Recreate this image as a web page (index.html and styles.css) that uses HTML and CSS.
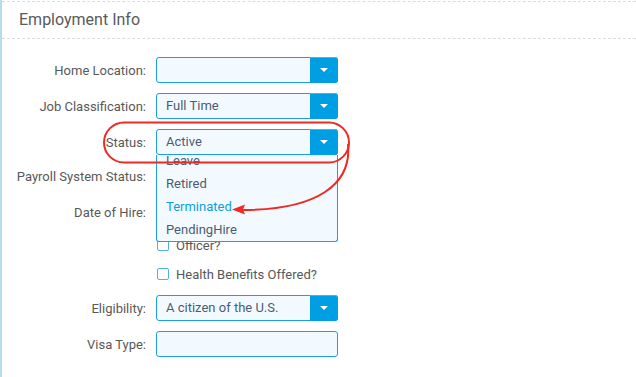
FILE: index.html
```html
<!DOCTYPE html>
<html lang="en">
<head>
    <meta charset="UTF-8">
    <title>Employment Info</title>
    <link rel="stylesheet" href="styles.css">
</head>
<body>
    <div class="panel">
        <div class="panel-head">Employment Info</div>

        <div class="form">
            <div class="row">
                <label>Home Location:</label>
                <div class="select"><span class="value"></span><span class="btn"><i class="caret"></i></span></div>
            </div>
            <div class="row">
                <label>Job Classification:</label>
                <div class="select"><span class="value">Full Time</span><span class="btn"><i class="caret"></i></span></div>
            </div>
            <div class="row status-row">
                <label>Status:</label>
                <div class="select open">
                    <span class="value">Active</span><span class="btn"><i class="caret"></i></span>
                    <!-- open dropdown, scrolled a little -->
                    <div class="options">
                        <ul>
                            <li>Leave</li>
                            <li>Retired</li>
                            <li class="hover">Terminated</li>
                            <li>PendingHire</li>
                        </ul>
                    </div>
                </div>
            </div>
            <div class="row">
                <label>Payroll System Status:</label>
                <div class="select"><span class="value"></span><span class="btn"><i class="caret"></i></span></div>
            </div>
            <div class="row">
                <label>Date of Hire:</label>
                <div class="input"></div>
            </div>
            <div class="row check-row officer">
                <span></span>
                <label class="check"><i class="box"></i>Officer?</label>
            </div>
            <div class="row check-row health">
                <span></span>
                <label class="check"><i class="box"></i>Health Benefits Offered?</label>
            </div>
            <div class="row eligibility">
                <label>Eligibility:</label>
                <div class="select"><span class="value">A citizen of the U.S.</span><span class="btn"><i class="caret"></i></span></div>
            </div>
            <div class="row">
                <label>Visa Type:</label>
                <div class="input"></div>
            </div>
        </div>

        <!-- red markup drawn on top of the screenshot -->
        <svg class="markup" width="636" height="377" viewBox="0 0 636 377">
            <rect x="104" y="122.5" width="245" height="40" rx="20" ry="20" fill="none" stroke="#ee2a22" stroke-width="2"/>
            <path d="M348 144 C 352 184, 318 210, 242 210" fill="none" stroke="#ee2a22" stroke-width="2"/>
            <polygon points="232,209.5 245,204.5 243,209.5 245,214.5" fill="#ee2a22"/>
        </svg>
    </div>
</body>
</html>
```

FILE: styles.css
```css
body {
    margin: 0;
    font-family: Roboto, "Liberation Sans", sans-serif;
    background: #fff;
    color: #555;
}
.panel {
    position: relative;
    height: 377px;
    border-left: 2px solid #b6dcef;
    overflow: hidden;
}
.panel-head {
    height: 36px;
    margin-top: 1px;
    padding-left: 17px;
    line-height: 36px;
    font-size: 16px;
    color: #5a5a5a;
    border-top: 1px dashed #dcdcdc;
    border-bottom: 1px dashed #dcdcdc;
}
.form {
    padding-top: 18px;
}
.row {
    display: grid;
    grid-template-columns: 144px 182px;
    column-gap: 10px;
    align-items: center;
    height: 26px;
    margin-bottom: 10px;
    font-size: 13px;
}
.row > label {
    text-align: right;
    color: #585858;
}
.status-row {
    margin-top: 1px;
    margin-bottom: 8px;
}
.select, .input {
    position: relative;
    display: flex;
    height: 26px;
    box-sizing: border-box;
    border: 1px solid #1e9fdc;
    border-radius: 3px;
    background: #f3faff;
}
.select .value {
    flex: 1;
    padding-left: 9px;
    line-height: 24px;
    color: #4b5c72;
}
.select .btn {
    width: 28px;
    margin: -1px -1px -1px 0;
    background: #009fe3;
    border-radius: 0 3px 3px 0;
    box-shadow: inset 0 1px 0 rgba(255, 255, 255, 0.25);
    display: flex;
    align-items: center;
    justify-content: center;
}
.caret {
    width: 0;
    height: 0;
    border-left: 4px solid transparent;
    border-right: 4px solid transparent;
    border-top: 4px solid #fff;
}
.options {
    position: absolute;
    top: 25px;
    left: -1px;
    width: 182px;
    height: 87px;
    box-sizing: border-box;
    border: 1px solid #1e9fdc;
    border-top: none;
    border-radius: 0 0 3px 3px;
    background: #f3faff;
    overflow: hidden;
    z-index: 2;
}
.options ul {
    list-style: none;
    margin: -6px 0 0;
    padding: 0;
}
.options li {
    height: 23px;
    line-height: 23px;
    padding-left: 9px;
    color: #4b5c72;
}
.options li.hover {
    color: #0e9ee0;
}
.check-row {
    height: 20px;
}
.officer {
    margin-top: 4px;
    margin-bottom: 9px;
}
.health {
    margin-bottom: 11px;
}
.check {
    display: flex;
    align-items: center;
    gap: 7px;
    font-size: 13px;
    color: #585858;
}
.box {
    width: 12px;
    height: 12px;
    margin-left: 1px;
    box-sizing: border-box;
    border: 1px solid #4fb3e4;
    border-radius: 2px;
    background: #fff;
}
.markup {
    position: absolute;
    top: 0;
    left: -2px;
    z-index: 3;
}
```
